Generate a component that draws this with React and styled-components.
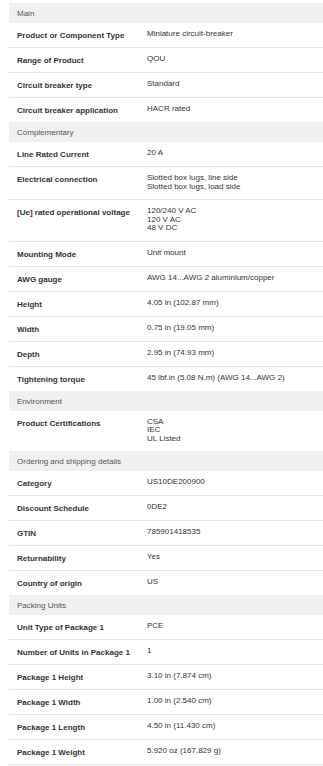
import React from "react";
import styled, { createGlobalStyle } from "styled-components";

const Global = createGlobalStyle`
  html, body { margin: 0; padding: 0; background: #ffffff; }
  body { font-family: "Liberation Sans", Arial, sans-serif; }
`;

const Page = styled.div`
  padding: 3px 0 0 9px;
`;

const Table = styled.div`
  display: flex;
  flex-direction: column;
  border-bottom: 1px solid #e6e6e6;
`;

const SectionHeader = styled.div`
  height: 20px;
  background: #f0f0f0;
  color: #555555;
  font-size: 8px;
  line-height: 9px;
  padding: 6px 8px 0;
  box-sizing: border-box;
`;

const Row = styled.div`
  display: grid;
  grid-template-columns: 130px 1fr;
  border-top: ${(p) => (p.$first ? "none" : "1px solid #e6e6e6")};
  font-size: 8px;
`;

const Label = styled.div`
  font-weight: 700;
  color: #333333;
  line-height: 9px;
  padding: 8px 8px 7px;
`;

const Value = styled.div`
  color: #333333;
  line-height: 8.5px;
  padding: 7px 8px 8px;
  white-space: pre-line;
`;

const data = [
  {
    title: "Main",
    rows: [
      ["Product or Component Type", "Miniature circuit-breaker"],
      ["Range of Product", "QOU"],
      ["Circuit breaker type", "Standard"],
      ["Circuit breaker application", "HACR rated"],
    ],
  },
  {
    title: "Complementary",
    rows: [
      ["Line Rated Current", "20 A"],
      ["Electrical connection", "Slotted box lugs, line side\nSlotted box lugs, load side"],
      ["[Ue] rated operational voltage", "120/240 V AC\n120 V AC\n48 V DC"],
      ["Mounting Mode", "Unit mount"],
      ["AWG gauge", "AWG 14...AWG 2 aluminium/copper"],
      ["Height", "4.05 in (102.87 mm)"],
      ["Width", "0.75 in (19.05 mm)"],
      ["Depth", "2.95 in (74.93 mm)"],
      ["Tightening torque", "45 lbf.in (5.08 N.m) (AWG 14...AWG 2)"],
    ],
  },
  {
    title: "Environment",
    rows: [["Product Certifications", "CSA\nIEC\nUL Listed"]],
  },
  {
    title: "Ordering and shipping details",
    rows: [
      ["Category", "US10DE200900"],
      ["Discount Schedule", "0DE2"],
      ["GTIN", "785901418535"],
      ["Returnability", "Yes"],
      ["Country of origin", "US"],
    ],
  },
  {
    title: "Packing Units",
    rows: [
      ["Unit Type of Package 1", "PCE"],
      ["Number of Units in Package 1", "1"],
      ["Package 1 Height", "3.10 in (7.874 cm)"],
      ["Package 1 Width", "1.00 in (2.540 cm)"],
      ["Package 1 Length", "4.50 in (11.430 cm)"],
      ["Package 1 Weight", "5.920 oz (167.829 g)"],
    ],
  },
];

export default function App() {
  return (
    <Page>
      <Global />
      <Table>
        {data.map((section) => (
          <React.Fragment key={section.title}>
            <SectionHeader>{section.title}</SectionHeader>
            {section.rows.map(([label, value], i) => (
              <Row key={label} $first={i === 0}>
                <Label>{label}</Label>
                <Value>{value}</Value>
              </Row>
            ))}
          </React.Fragment>
        ))}
      </Table>
    </Page>
  );
}
